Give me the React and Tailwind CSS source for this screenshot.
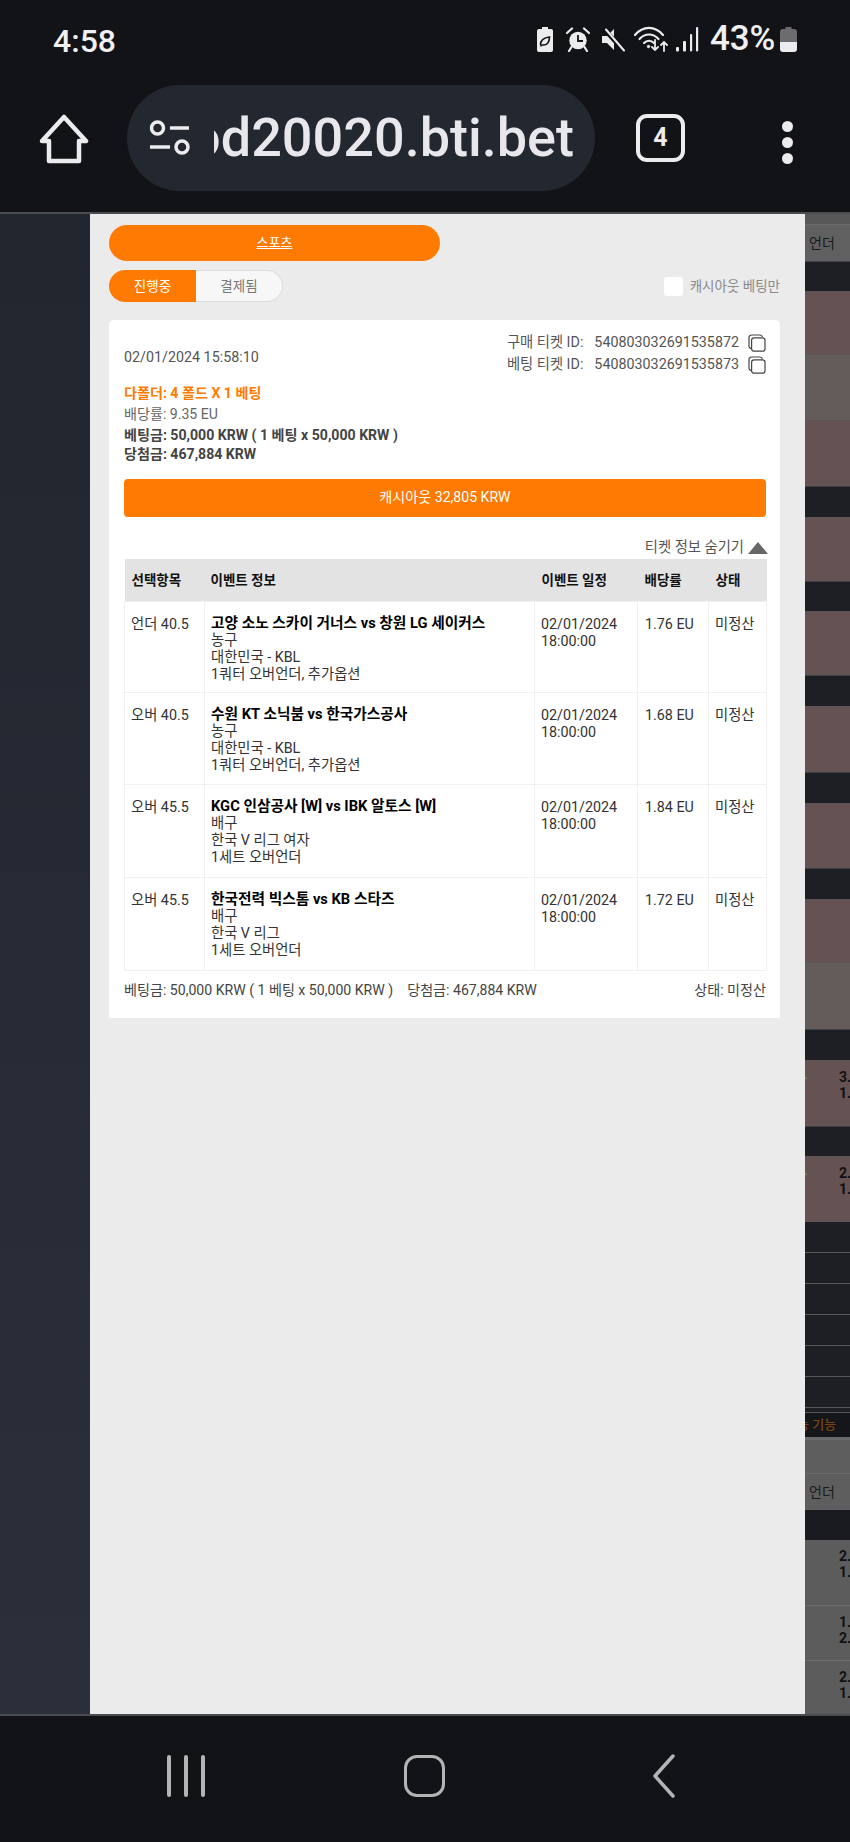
import React from 'react';

const bets = [
  { pick: '언더 40.5', title: '고양 소노 스카이 거너스 vs 창원 LG 세이커스', sport: '농구', league: '대한민국 - KBL', market: '1쿼터 오버언더, 추가옵션', odds: '1.76 EU', h: 'h-[91px]' },
  { pick: '오버 40.5', title: '수원 KT 소닉붐 vs 한국가스공사', sport: '농구', league: '대한민국 - KBL', market: '1쿼터 오버언더, 추가옵션', odds: '1.68 EU', h: 'h-[92px]' },
  { pick: '오버 45.5', title: 'KGC 인삼공사 [W] vs IBK 알토스 [W]', sport: '배구', league: '한국 V 리그 여자', market: '1세트 오버언더', odds: '1.84 EU', h: 'h-[93px]' },
  { pick: '오버 45.5', title: '한국전력 빅스톰 vs KB 스타즈', sport: '배구', league: '한국 V 리그', market: '1세트 오버언더', odds: '1.72 EU', h: 'h-[93px]' },
];

const stripRows = [
  { h: 'h-[30px]', bg: 'bg-[#1e1f24]' },
  { h: 'h-[63px]', bg: 'bg-[#645352]' },
  { h: 'h-[66px]', bg: 'bg-[#645c5a]' },
  { h: 'h-[66px]', bg: 'bg-[#645352]' },
  { h: 'h-[31px]', bg: 'bg-[#1e1f24]' },
  { h: 'h-[64px]', bg: 'bg-[#645352]' },
  { h: 'h-[30px]', bg: 'bg-[#1e1f24]' },
  { h: 'h-[64px]', bg: 'bg-[#645352]' },
  { h: 'h-[31px]', bg: 'bg-[#1e1f24]' },
  { h: 'h-[66px]', bg: 'bg-[#645352]' },
  { h: 'h-[31px]', bg: 'bg-[#1e1f24]' },
  { h: 'h-[65px]', bg: 'bg-[#645352]' },
  { h: 'h-[31px]', bg: 'bg-[#1e1f24]' },
  { h: 'h-[63px]', bg: 'bg-[#645352]' },
  { h: 'h-[67px]', bg: 'bg-[#645c5a]' },
  { h: 'h-[31px]', bg: 'bg-[#1e1f24]' },
  { h: 'h-[66px]', bg: 'bg-[#645352]', nums: ['3.', '1.'], ticks: true },
  { h: 'h-[30px]', bg: 'bg-[#1e1f24]' },
  { h: 'h-[66px]', bg: 'bg-[#645352]', nums: ['2.', '1.'], ticks: true },
];

function Nums({ nums, ticks }) {
  return (
    <div className="flex flex-col pt-[8px] pl-[34px] text-[14px] leading-[16px] font-bold text-[#111] relative">
      {nums.map((n, i) => <span key={i}>{n}</span>)}
      {ticks && <span className="absolute left-0 top-[16px] w-[2px] h-[2px] bg-[#6f7a5c]" />}
      {ticks && <span className="absolute left-0 top-[30px] w-[2px] h-[2px] bg-[#8c3a44]" />}
    </div>
  );
}

function CopyIcon() {
  return (
    <svg width="18" height="18" viewBox="0 0 18 18" fill="none" stroke="#444" strokeWidth="1.2" className="ml-[9px] shrink-0">
      <path d="M3.5 14.5A2.5 2.5 0 0 1 1 12V3.5A2.5 2.5 0 0 1 3.5 1H12a2.5 2.5 0 0 1 2.4 2" />
      <rect x="3.6" y="3.8" width="13.4" height="13.4" rx="2.5" fill="#fff" />
    </svg>
  );
}

function StatusBar() {
  return (
    <div className="h-[85px] flex justify-between items-start pl-[53px] pr-[53px] pt-[24px] relative">
      <span className="text-[32px] leading-[33px] font-medium text-[#f0f0f2] mt-[1px]">4:58</span>
      <div className="flex items-center h-[34px] pb-[4px] mr-0">
        {/* battery saver */}
        <svg width="18" height="25" viewBox="0 0 18 25" className="mr-[12px]">
          <path d="M6 0h6v2h3a2 2 0 0 1 2 2v19a2 2 0 0 1-2 2H3a2 2 0 0 1-2-2V4a2 2 0 0 1 2-2h3z" fill="#ececee" />
          <path d="M4.5 18c0-5 3.5-7.5 9-8 0 5.500-2.500 8.500-7 8-.8 0-1.500.5-2 1.500" fill="none" stroke="#121317" strokeWidth="1.6" />
        </svg>
        {/* alarm */}
        <svg width="24" height="25" viewBox="0 0 24 25" className="mr-[11px]">
          <circle cx="12" cy="13.500" r="8.700" fill="#ececee" />
          <path d="M12 8v6h5" fill="none" stroke="#121317" strokeWidth="1.800" />
          <path d="M1 6l5-4.500M23 6l-5-4.500M5.500 20l-2.500 4M18.500 20l2.500 4" stroke="#ececee" strokeWidth="2.200" strokeLinecap="round" />
        </svg>
        {/* muted speaker */}
        <svg width="24" height="25" viewBox="0 0 24 25" className="mr-[9px]">
          <path d="M1 9h5l7-7v21l-7-7H1z" fill="#ececee" />
          <path d="M3 2l20 22" stroke="#121317" strokeWidth="4.500" />
          <path d="M5 2.500l18 21" stroke="#ececee" strokeWidth="2" strokeLinecap="round" />
        </svg>
        {/* wifi with arrows */}
        <svg width="34" height="26" viewBox="0 0 34 26" className="mr-[8px]" fill="none" stroke="#ececee" strokeLinecap="round">
          <path d="M1 9c8-9.500 20-9.500 28 0" strokeWidth="2.200" />
          <path d="M5.500 13c5.500-6 13.500-6 19 0" strokeWidth="2.200" />
          <path d="M10 17c3-3 7-3 10 0" strokeWidth="2.200" />
          <circle cx="14.500" cy="20.500" r="1.200" fill="#ececee" />
          <path d="M21 14v10M18 21l3 3 3-3M30 25V16M27 19l3-3 3 3" strokeWidth="1.800" />
        </svg>
        {/* signal */}
        <svg width="23" height="25" viewBox="0 0 23 25" className="mr-[11px]">
          <rect x="0" y="20" width="3" height="4.500" rx="1" fill="#ececee" />
          <rect x="7" y="14" width="3" height="10.500" rx="1" fill="#ececee" />
          <rect x="14" y="7" width="2.200" height="17.500" rx="1" fill="#ececee" />
          <rect x="20" y="0" width="2.200" height="24.500" rx="1" fill="#ececee" />
        </svg>
        <span className="text-[35px] leading-[34px] font-medium text-[#f0f0f2] tracking-[-0.2px]">43%</span>
        <svg width="17" height="25" viewBox="0 0 17 25" className="ml-[5px]">
          <path d="M5.500 0h6v2H14a3 3 0 0 1 3 3v3H0V5a3 3 0 0 1 3-3h2.500z" fill="#6c6c6e" />
          <rect x="0" y="8" width="17" height="7" fill="#6c6c6e" />
          <path d="M0 15h17v7a3 3 0 0 1-3 3H3a3 3 0 0 1-3-3z" fill="#ececee" />
        </svg>
      </div>
    </div>
  );
}

function UrlBar() {
  return (
    <div className="h-[127px] flex items-start relative">
      <svg width="50" height="50" viewBox="0 0 50 50" fill="none" stroke="#ececee" strokeWidth="4.500" strokeLinejoin="round" className="ml-[39px] mt-[29px] shrink-0">
        <path d="M10 47V27H3L25 3l22 24h-7v20z" />
      </svg>
      <div className="ml-[38px] w-[468px] h-[106px] rounded-[53px] bg-[#232730] flex items-center overflow-hidden shrink-0">
        <svg width="42" height="36" viewBox="0 0 42 36" fill="none" stroke="#ececee" strokeWidth="3.500" className="ml-[22px] shrink-0">
          <circle cx="8.500" cy="8" r="6" />
          <path d="M21 8h19M1 27h20" />
          <circle cx="33" cy="27" r="6" />
        </svg>
        <div className="ml-[23px] w-[360px] overflow-hidden flex justify-end shrink-0">
          <span className="text-[54px] leading-[60px] font-medium text-[#e8e8ec] whitespace-nowrap">od20020.bti.bet</span>
        </div>
      </div>
      <div className="ml-[41px] mt-[29px] w-[49px] h-[48px] rounded-[11px] border-[4.5px] border-[#ececee] flex items-center justify-center text-[25px] font-bold text-[#ececee] shrink-0">4</div>
      <div className="ml-[97px] mt-[36px] flex flex-col gap-[5px] shrink-0">
        <span className="w-[11px] h-[11px] rounded-full bg-[#ececee]" />
        <span className="w-[11px] h-[11px] rounded-full bg-[#ececee]" />
        <span className="w-[11px] h-[11px] rounded-full bg-[#ececee]" />
      </div>
    </div>
  );
}

function RightStrip() {
  return (
    <div className="w-[45px] flex flex-col overflow-hidden shrink-0">
      <div className="h-[10px] bg-[#585858] shrink-0" />
      <div className="h-[37px] bg-[#606060] border-t border-[#6a6a6a] flex items-center pl-[4px] text-[14px] text-[#1a1a1a] shrink-0">언더</div>
      {stripRows.map((r, i) => (
        <div key={i} className={`${r.h} ${r.bg} border-t border-[#55555a]/60 shrink-0`}>
          {r.nums && <Nums nums={r.nums} ticks={r.ticks} />}
        </div>
      ))}
      {[0, 1, 2, 3, 4, 5].map((i) => (
        <div key={i} className="h-[31px] bg-[#1e1f24] border-b border-[#55565a] shrink-0" />
      ))}
      <div className="h-[5px] bg-[#1e1f24] border-b border-[#55565a] shrink-0" />
      <div className="h-[24px] bg-[#15161a] flex items-center text-[13px] font-medium text-[#7a4310] whitespace-nowrap overflow-hidden shrink-0">
        <span className="-ml-[8px]">능 기능</span>
      </div>
      <div className="h-[3px] bg-[#6a6a6a] shrink-0" />
      <div className="h-[34px] bg-[#5e5e5e] border-b border-[#6a6a6a] shrink-0" />
      <div className="h-[36px] bg-[#5e5e5e] flex items-center pl-[4px] text-[14px] text-[#1a1a1a] shrink-0">언더</div>
      <div className="h-[30px] bg-[#1a1b20] shrink-0" />
      <div className="h-[66px] bg-[#5c5c5c] border-b border-[#6c6c6c] shrink-0"><Nums nums={['2.', '1.']} /></div>
      <div className="h-[55px] bg-[#5c5c5c] border-b border-[#6c6c6c] shrink-0"><Nums nums={['1.', '2.']} /></div>
      <div className="flex-1 bg-[#5c5c5c]"><Nums nums={['2.', '1.']} /></div>
    </div>
  );
}

function TicketTable() {
  return (
    <table className="w-[642px] table-fixed border-collapse">
      <colgroup>
        <col className="w-[80px]" />
        <col className="w-[330px]" />
        <col className="w-[103px]" />
        <col className="w-[71px]" />
        <col className="w-[58px]" />
      </colgroup>
      <thead>
        <tr className="h-[42px] bg-[#e3e3e3] text-[13.5px] font-bold text-[#111] text-left">
          <th className="px-[7px] font-bold">선택항목</th>
          <th className="px-[6px] font-bold">이벤트 정보</th>
          <th className="px-[7px] font-bold">이벤트 일정</th>
          <th className="px-[7px] font-bold">배당률</th>
          <th className="px-[7px] font-bold">상태</th>
        </tr>
      </thead>
      <tbody className="text-[14.3px] leading-[17px] text-[#333]">
        {bets.map((b, i) => (
          <tr key={i} className={b.h}>
            <td className="border-[1.5px] border-[#f0f0f0] pl-[6px] pr-[2px] pt-[14px] align-top">{b.pick}</td>
            <td className="border-[1.5px] border-[#f0f0f0] px-[6px] pt-[12px] align-top">
              <div className="text-[14.7px] leading-[18px] font-bold text-black whitespace-nowrap">{b.title}</div>
              <div>{b.sport}</div>
              <div>{b.league}</div>
              <div>{b.market}</div>
            </td>
            <td className="border-[1.5px] border-[#f0f0f0] px-[6px] pt-[14px] align-top">02/01/2024<br />18:00:00</td>
            <td className="border-[1.5px] border-[#f0f0f0] px-[7px] pt-[14px] align-top">{b.odds}</td>
            <td className="border-[1.5px] border-[#f0f0f0] px-[6px] pt-[14px] align-top">미정산</td>
          </tr>
        ))}
      </tbody>
    </table>
  );
}

function Modal() {
  return (
    <div className="w-[715px] bg-[#ebebeb] pl-[19px] pr-[25px] pt-[11px] shrink-0">
      <button className="w-[331px] h-[36px] rounded-[18px] bg-[#ff7a00] text-white text-[13px] underline block">스포츠</button>
      <div className="flex items-center justify-between mt-[9px] h-[32px]">
        <div className="flex text-[13.500px]">
          <div className="w-[87px] h-[32px] rounded-l-[16px] bg-[#ff7a00] text-white flex items-center justify-center">진행중</div>
          <div className="w-[87px] h-[32px] rounded-r-[16px] bg-[#f7f7f7] border border-l-0 border-[#dcdcdc] text-[#777] flex items-center justify-center">결제됨</div>
        </div>
        <div className="flex items-center text-[13.500px] text-[#8a8a8a]">
          <span className="w-[19px] h-[19px] rounded-[3px] bg-white mr-[7px]" />
          캐시아웃 베팅만
        </div>
      </div>
      <div className="mt-[18px] h-[698px] bg-white rounded-t-[5px] pl-[15px] pr-[14px] pt-[14px]">
        <div className="flex justify-between h-[49px] text-[14.3px] text-[#555]">
          <span className="mt-[14px] leading-[18px]">02/01/2024 15:58:10</span>
          <div className="flex flex-col gap-[4px]">
            <div className="flex items-center h-[18px]">
              <span className="mr-[11px]">구매 티켓 ID:</span>
              <span>540803032691535872</span>
              <CopyIcon />
            </div>
            <div className="flex items-center h-[18px]">
              <span className="mr-[11px]">베팅 티켓 ID:</span>
              <span>540803032691535873</span>
              <CopyIcon />
            </div>
          </div>
        </div>
        <div className="text-[14.1px] leading-[18px] text-[#444]">
          <div className="font-bold text-[#ff7a00] leading-[20px]">다폴더: 4 폴드 X 1 베팅</div>
          <div className="mt-[2px] text-[#666]">배당률: 9.35 EU</div>
          <div className="mt-[3px] font-bold">베팅금: 50,000 KRW ( 1 베팅 x 50,000 KRW )</div>
          <div className="font-bold mt-[1px]">당첨금: 467,884 KRW</div>
        </div>
        <button className="mt-[16px] w-full h-[38px] rounded-[4px] bg-[#ff7a00] text-white text-[14.1px] block">캐시아웃 32,805 KRW</button>
        <div className="mt-[20px] h-[22px] flex items-center justify-end text-[14.3px] text-[#555]">
          티켓 정보 숨기기
          <svg width="20" height="12" viewBox="0 0 20 12" className="ml-[4px] -mr-[2px]"><path d="M10 0l10 12H0z" fill="#666" /></svg>
        </div>
        <TicketTable />
        <div className="mt-[10px] flex justify-between text-[14.1px] leading-[18px] text-[#444]">
          <div>
            베팅금: 50,000 KRW ( 1 베팅 x 50,000 KRW )
            <span className="ml-[14px]">당첨금: 467,884 KRW</span>
          </div>
          <span>상태: 미정산</span>
        </div>
      </div>
    </div>
  );
}

function NavBar() {
  return (
    <div className="flex-1 bg-[#121317] flex items-start pt-[39px]">
      <div className="ml-[167px] flex gap-[13.500px] h-[42px]">
        <span className="w-[3.500px] h-full rounded bg-[#b4b4b6]" />
        <span className="w-[3.500px] h-full rounded bg-[#b4b4b6]" />
        <span className="w-[3.500px] h-full rounded bg-[#b4b4b6]" />
      </div>
      <div className="ml-[199px] w-[41px] h-[42px] rounded-[13px] border-[3.500px] border-[#b4b4b6]" />
      <svg width="24" height="44" viewBox="0 0 24 44" fill="none" stroke="#b4b4b6" strokeWidth="3.500" strokeLinecap="round" strokeLinejoin="round" className="ml-[207px] -mt-[1px]">
        <path d="M21 2L3 22l18 20" />
      </svg>
    </div>
  );
}

export default function App() {
  return (
    <div className="w-[850px] h-[1842px] flex flex-col overflow-hidden bg-[#121317] font-['Roboto','Noto_Sans_CJK_KR',sans-serif]">
      <StatusBar />
      <UrlBar />
      <div className="h-[1504px] flex border-y-[2px] border-[#4a4c52] shrink-0">
        <div className="w-[90px] bg-gradient-to-b from-[#22262f] to-[#2b2f3a] shrink-0" />
        <Modal />
        <RightStrip />
      </div>
      <NavBar />
    </div>
  );
}
